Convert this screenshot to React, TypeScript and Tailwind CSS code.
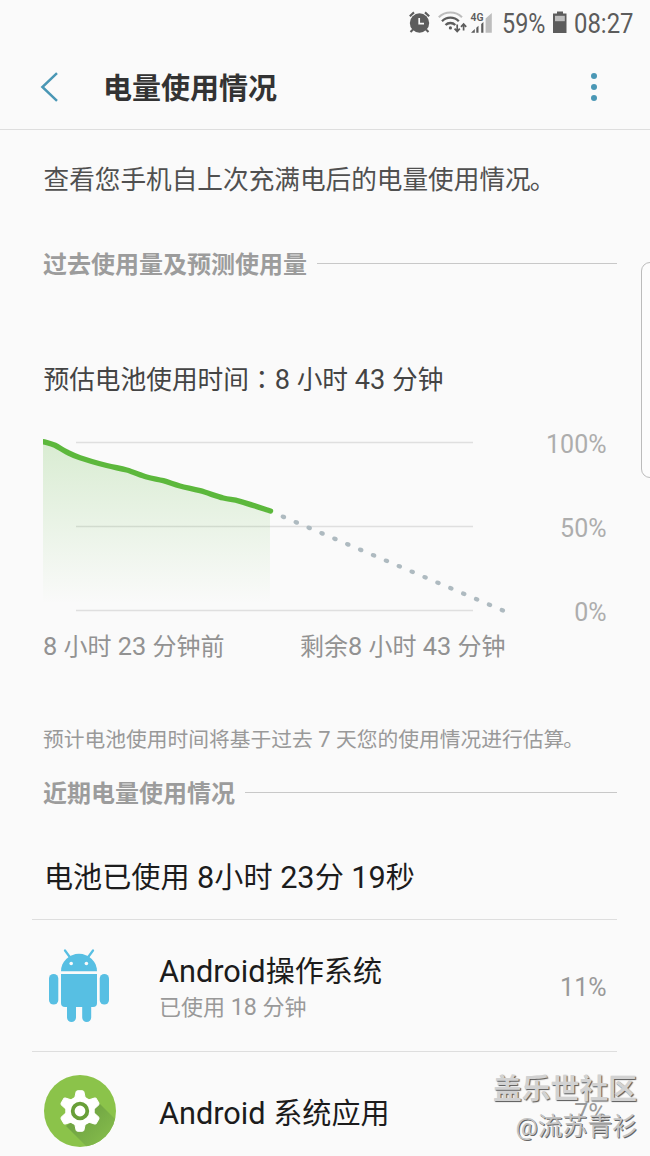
import React from "react";

const LEVEL_POINTS: [number, number][] = [
  [41, 441.5],
  [46, 442.3],
  [55, 445.3],
  [66.7, 452],
  [80, 457.7],
  [106.7, 465.5],
  [126.7, 470],
  [146.7, 477],
  [163.3, 480.7],
  [180, 486],
  [200, 490.7],
  [223.3, 498],
  [240, 501.3],
  [270.5, 511],
];

// 平滑曲线 (Catmull-Rom 转贝塞尔)
const smoothPath = (pts: [number, number][]) => {
  let d = `M${pts[0][0]} ${pts[0][1]}`;
  for (let i = 0; i < pts.length - 1; i++) {
    const p0 = pts[i - 1] ?? pts[i];
    const p1 = pts[i];
    const p2 = pts[i + 1];
    const p3 = pts[i + 2] ?? p2;
    d += ` C${p1[0] + (p2[0] - p0[0]) / 6} ${p1[1] + (p2[1] - p0[1]) / 6} ${
      p2[0] - (p3[0] - p1[0]) / 6
    } ${p2[1] - (p3[1] - p1[1]) / 6} ${p2[0]} ${p2[1]}`;
  }
  return d;
};

// 西文和数字比汉字略大
function Mixed({ text }: { text: string }) {
  return (
    <>
      {text.split(/([ -~]+)/).map((run, i) =>
        i % 2 ? (
          <span key={i} className="text-[1.055em]">
            {run}
          </span>
        ) : (
          run
        )
      )}
    </>
  );
}

function AlarmIcon() {
  return (
    <svg width="22" height="22" viewBox="0 0 22 22" fill="none">
      <circle cx="11.5" cy="12" r="9.7" fill="#5c5c5c" />
      <path d="M1.8 5.2 6 1.4M21.2 5.2 17 1.4" stroke="#5c5c5c" strokeWidth="2.1" />
      <path d="M5 18.5 2.5 21M18 18.5 20.5 21" stroke="#5c5c5c" strokeWidth="2.1" />
      <path d="M11.2 7v5.6h4.8" stroke="#fafafa" strokeWidth="1.7" />
    </svg>
  );
}

function WifiIcon() {
  return (
    <svg width="30" height="22" viewBox="0 0 30 22" fill="none">
      <path d="M.8 6.2a16.5 16.5 0 0 1 23.2 0" stroke="#bdbdbd" strokeWidth="2.1" />
      <path d="M4 10.2a11.8 11.8 0 0 1 16.8 0" stroke="#5c5c5c" strokeWidth="2.3" />
      <path d="M7.5 14a7 7 0 0 1 9.8 0" stroke="#5c5c5c" strokeWidth="2.3" />
      <circle cx="12.4" cy="16.9" r="1.6" fill="#5c5c5c" />
      <path d="M19.2 13.6v6.8M16.6 17.6l2.6 2.9 2.6-2.9" stroke="#5c5c5c" strokeWidth="1.7" />
      <path d="M25.6 19.4v-6.4M23 15.9l2.6-2.9 2.6 2.9" stroke="#5c5c5c" strokeWidth="1.7" />
    </svg>
  );
}

function SignalIcon() {
  return (
    <svg width="23" height="22" viewBox="0 0 23 22">
      <text
        x="0.5"
        y="9.8"
        fontSize="10.5"
        fontWeight="600"
        textLength="13"
        lengthAdjust="spacingAndGlyphs"
        fill="#5c5c5c"
        className="font-[Roboto,sans-serif]"
      >
        4G
      </text>
      <path d="M1 21.8 4.8 18v3.8zM6.3 16.8l2.2-2v7H6.3zM11.2 13l2.2-2v10.8h-2.2z" fill="#5c5c5c" />
      <path d="M15.6 7.6 21.8 2v19.8h-6.2z" fill="#bdbdbd" />
    </svg>
  );
}

function BatteryIcon() {
  return (
    <svg width="16" height="22" viewBox="0 0 16 22">
      <path d="M5 .6h6v2h3.5V22H1V2.6h4z" fill="#5c5c5c" />
      <path d="M3 4.8h9.8v5.4H3z" fill="#bdbdbd" />
    </svg>
  );
}

function StatusBar() {
  return (
    <div className="flex h-[46px] text-[27px] leading-[48px] text-[#5c5c5c]">
      <div className="mt-[11px] ml-[408px] flex h-[22px] shrink-0">
        <AlarmIcon />
        <div className="ml-2">
          <WifiIcon />
        </div>
        <div className="ml-[2px]">
          <SignalIcon />
        </div>
      </div>
      <span className="ml-[9px] w-[43px] origin-left scale-x-[0.865]">59%</span>
      <div className="mt-[11px] ml-[7px] shrink-0">
        <BatteryIcon />
      </div>
      <span className="ml-[6px] w-[60px] origin-left scale-x-[0.885]">08:27</span>
    </div>
  );
}

function AppBar() {
  return (
    <header className="flex h-[84px] items-center border-b border-[#dedede]">
      <svg width="20" height="30" viewBox="0 0 20 30" fill="none" className="mb-[2px] ml-[39px]">
        <path d="M18 1.2 3.4 15 18 28.8" stroke="#4a97b5" strokeWidth="2.5" />
      </svg>
      <h1 className="ml-[44px] pt-[2px] text-[29px] leading-[40px] font-bold text-[#333]">电量使用情况</h1>
      <div className="mr-[53px] mb-px ml-auto flex flex-col gap-[4.5px]">
        <i className="size-[6.5px] rounded-full bg-[#4a97b5]" />
        <i className="size-[6.5px] rounded-full bg-[#4a97b5]" />
        <i className="size-[6.5px] rounded-full bg-[#4a97b5]" />
      </div>
    </header>
  );
}

function SectionTitle({ children }: { children: React.ReactNode }) {
  return (
    <div className="mr-[33px] ml-[43px] flex h-[30px] items-center gap-[10px]">
      <h2 className="pt-[4px] text-[24px] leading-[30px] font-bold whitespace-nowrap text-[#9c9c9c]">{children}</h2>
      <div className="h-px flex-1 bg-[#c8c8c8]" />
    </div>
  );
}

function BatteryChart() {
  const line = smoothPath(LEVEL_POINTS);
  return (
    <div className="flex h-[190px]">
      <svg width="474" height="190" viewBox="43 430 474 190" fill="none" className="ml-[43px]">
        <defs>
          <linearGradient id="level" x1="0" y1="442" x2="0" y2="604" gradientUnits="userSpaceOnUse">
            <stop offset="0" stopColor="#5cb83c" stopOpacity="0.21" />
            <stop offset="1" stopColor="#5cb83c" stopOpacity="0" />
          </linearGradient>
        </defs>
        <path d="M76 442.5h397M76 526.5h397M76 610.5h397" stroke="#dfdfdf" strokeWidth="1.5" />
        <path d={`${line}L270 511V604H41z`} fill="url(#level)" />
        <path d={line} stroke="#5cb83c" strokeWidth="5.4" strokeLinecap="round" />
        {Array.from({ length: 18 }, (_, i) => {
          const x = 283.4 + i * 12.88;
          const y = 516.9 + i * 5.49;
          return (
            <ellipse key={i} cx={x} cy={y} rx="2.8" ry="2.2" fill="#aebac0" transform={`rotate(22 ${x} ${y})`} />
          );
        })}
      </svg>
      <div className="mt-[-27px] mr-[43.5px] ml-auto flex flex-col text-right text-[25px] leading-[84px] text-[#adadad]">
        <span>100%</span>
        <span>50%</span>
        <span>0%</span>
      </div>
    </div>
  );
}

function AndroidIcon() {
  return (
    <svg width="62" height="74" viewBox="0 0 62 74" fill="#57bfe3">
      <path d="M13 22.3a18 17.5 0 0 1 36 0z" />
      <path d="M17 1.5 22.5 9M45 1.5 39.5 9" stroke="#57bfe3" strokeWidth="2.2" strokeLinecap="round" />
      <circle cx="23.2" cy="14.5" r="1.8" fill="#fafafa" />
      <circle cx="38.4" cy="14.5" r="1.8" fill="#fafafa" />
      <path d="M13 25h36v29a4 4 0 0 1-4 4H17a4 4 0 0 1-4-4z" />
      <rect x="1" y="25" width="9.3" height="30.5" rx="4.6" />
      <rect x="51.7" y="25" width="9.3" height="30.5" rx="4.6" />
      <path d="M19 56h9v12.5a4.5 4.5 0 0 1-9 0zM34.2 56h9v12.5a4.5 4.5 0 0 1-9 0z" />
    </svg>
  );
}

function SystemAppIcon() {
  return (
    <svg width="74" height="74" viewBox="-37 -37 74 74">
      <defs>
        <clipPath id="disc">
          <circle r="36" />
        </clipPath>
        <linearGradient id="shade" x1="0" y1="0" x2="26" y2="26" gradientUnits="userSpaceOnUse">
          <stop offset="0.2" stopColor="#72a644" />
          <stop offset="1" stopColor="#82b94a" />
        </linearGradient>
      </defs>
      <circle r="36" fill="#8bc34a" />
      <path d="M17-10 43 16V43H14L-14 15z" fill="url(#shade)" clipPath="url(#disc)" />
      {[0, 60, 120, 180, 240, 300].map((deg) => (
        <path
          key={deg}
          d="M-5.5-12-3.9-19.2Q-3.6-20.3-2.5-20.3H2.5Q3.6-20.3 3.9-19.2L5.5-12z"
          fill="#fff"
          stroke="#fff"
          strokeLinejoin="round"
          transform={`rotate(${deg})`}
        />
      ))}
      <circle r="14.8" fill="#fff" />
      <circle r="7.3" fill="#fff" stroke="#689f38" strokeWidth="3.8" />
    </svg>
  );
}

export default function App() {
  return (
    <div className="relative h-[1156px] w-[650px] overflow-hidden bg-[#fafafa] font-[Roboto,'Noto_Sans_CJK_SC',sans-serif] whitespace-nowrap">
      <StatusBar />
      <AppBar />

      <p className="mt-[30px] ml-[43.5px] h-[40px] text-[25.65px] leading-[40px] text-[#505050]">
        查看您手机自上次充满电后的电量使用情况<span className="-ml-px">。</span>
      </p>
      <div className="mt-[48px]">
        <SectionTitle>过去使用量及预测使用量</SectionTitle>
      </div>

      <p className="mt-[82px] ml-[43.5px] h-[40px] text-[25.7px] leading-[40px] text-[#444]">
        预估电池使用时间<span className="font-['Noto_Sans_CJK_TC'] leading-none">：</span>
        <Mixed text="8 小时 43 分钟" />
      </p>
      <div className="mt-[30px]">
        <BatteryChart />
      </div>
      <div className="mt-[7px] mr-[144.5px] ml-[43px] flex h-[40px] justify-between text-[24px] leading-[40px] text-[#929292]">
        <span>
          <Mixed text="8 小时 23 分钟前" />
        </span>
        <span>
          <Mixed text="剩余8 小时 43 分钟" />
        </span>
      </div>

      <p className="mt-[53px] ml-[43px] h-[40px] text-[20.75px] leading-[40px] text-[#999]">
        <Mixed text="预计电池使用时间将基于过去 7 天您的使用情况进行估算" />
        <span className="-ml-px">。</span>
      </p>
      <div className="mt-[17px]">
        <SectionTitle>近期电量使用情况</SectionTitle>
      </div>

      {/* 应用列表 */}
      <p className="mt-[51px] ml-[44px] h-[40px] text-[29.1px] leading-[40px] text-[#1c1c1c]">
        <Mixed text="电池已使用 8小时 23分 19秒" />
      </p>
      <div className="mt-[21px] mr-[33px] ml-[32px]">
        <div className="flex h-[132px] items-center border-t border-[#dedede] pr-[10.5px] pl-[16px]">
          <AndroidIcon />
          <div className="ml-[49px] flex flex-col pt-[4px]">
            <span className="h-[39px] text-[29.1px] leading-[40px] text-[#1c1c1c]">
              <Mixed text="Android操作系统" />
            </span>
            <span className="h-[32px] text-[22px] leading-[32px] text-[#999]">
              <Mixed text="已使用 18 分钟" />
            </span>
          </div>
          <span className="ml-auto pt-[4px] text-[25px] text-[#999]">11%</span>
        </div>
        <div className="flex h-[120px] items-center border-t border-[#dedede] pr-[10.5px] pl-[11px]">
          <div className="mb-[2px]">
            <SystemAppIcon />
          </div>
          <span className="mt-[4px] ml-[42px] h-[40px] text-[29.1px] leading-[40px] text-[#1c1c1c]">
            <Mixed text="Android 系统应用" />
          </span>
          <span className="mt-[4px] ml-auto text-[25px] text-[#999]">7%</span>
        </div>
      </div>

      {/* 侧屏面板把手 */}
      <div className="absolute top-[262px] left-[641px] h-[216px] w-[20px] rounded-l-[9px] border border-[#bbb] bg-[#fcfcfc]" />

      {/* 水印 */}
      <div className="absolute right-[13px] bottom-[11px] flex flex-col items-end">
        <span className="text-[28.8px] leading-[40px] font-bold text-[#d2d2d2] [text-shadow:1px_1px_1px_#555]">
          盖乐世社区
        </span>
        <span className="text-[24.8px] leading-[36px] text-[#c4c4c4] [text-shadow:1px_1px_0_#666]">@流苏青衫</span>
      </div>
    </div>
  );
}
